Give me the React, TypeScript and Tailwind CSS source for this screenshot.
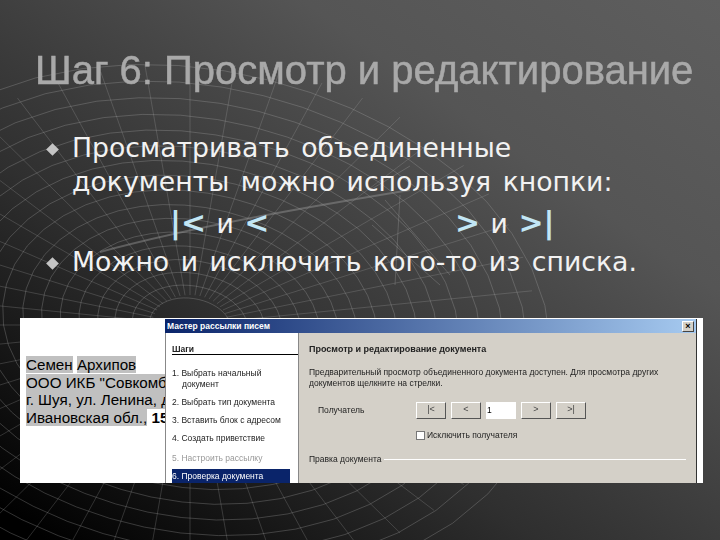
import React from "react";

const cx = 190, cy = 325;
const rings = [28, 40, 52, 64, 77, 90, 103, 116, 130, 144, 158, 172, 187, 202, 218, 234, 250];
function WebLines() {
  const arcs: string[] = [];
  rings.forEach((r, i) => {
    const rx = r * 1.38, ry = r * 1.0 + i * 1.2;
    const pts: string[] = [];
    for (let a = -180; a <= 180; a += 8) {
      const t = (a * Math.PI) / 180;
      const wob = 1 + 0.07 * Math.sin(2 * t + 0.6);
      const x = cx + rx * wob * Math.cos(t);
      const y = cy + ry * wob * Math.sin(t);
      pts.push(`${x.toFixed(1)},${y.toFixed(1)}`);
    }
    arcs.push(pts.join(" "));
  });
  const spokes: [number, number, number, number][] = [];
  for (let a = 0; a < 360; a += 7.5) {
    const t = (a * Math.PI) / 180;
    const c = Math.cos(t), s = Math.sin(t);
    spokes.push([cx + 38 * c, cy + 30 * s, cx + 345 * c, cy + 262 * s]);
  }
  return (
    <svg className="absolute inset-0" width="720" height="540" viewBox="0 0 720 540" fill="none">
      {arcs.map((p, i) => (
        <polyline key={i} points={p} stroke="#b0b0b0" strokeOpacity={0.36} strokeWidth={0.8} />
      ))}
      {spokes.map((l, i) => (
        <line key={i} x1={l[0]} y1={l[1]} x2={l[2]} y2={l[3]} stroke="#b0b0b0" strokeOpacity={0.3} strokeWidth={0.8} />
      ))}
      <path d="M100 252 C 200 225 320 205 410 190" stroke="#9a9a9a" strokeOpacity={0.45} strokeWidth={2} />
      <path d="M370 190 L410 166 M385 200 L450 275 M400 195 L395 285 M372 225 L440 285" stroke="#a8a8a8" strokeOpacity={0.3} strokeWidth={1} />
    </svg>
  );
}

function Btn({ t }: { t: string }) {
  return (
    <div className="w-[30px] h-[17px] flex items-center justify-center text-[9px] text-[#444] bg-[#d4d0c8] border border-t-white border-l-white border-r-[#555] border-b-[#555]">
      {t}
    </div>
  );
}

function Bullet() {
  return (
    <div className="w-[26px] pt-[14px] shrink-0">
      <div className="w-[9px] h-[9px] ml-[1.5px] rotate-45 bg-[#c4c4c4]" />
    </div>
  );
}

export default function App() {
  return (
    <div className="relative w-[720px] h-[540px] overflow-hidden bg-[linear-gradient(35deg,#000000_3%,#2f2f2f_36%,#555555_72%,#5e5e5e_100%)]">
      <WebLines />
      <div className="relative flex flex-col pt-[48px] font-['DejaVu_Sans',sans-serif] text-[#f2f2f2]">
        <h1 className="pl-[35px] h-[44px] leading-[44px] whitespace-nowrap font-['Liberation_Sans',sans-serif] text-[40px] text-[#a9a9a9] [-webkit-text-stroke:0.5px_#a9a9a9] blur-[0.3px]">
          Шаг 6: Просмотр и редактирование
        </h1>
        <div className="mt-[39px] pl-[46px] text-[26.7px] leading-[34px] [word-spacing:3px]">
          <div className="flex items-start">
            <Bullet />
            <div className="whitespace-nowrap">
              Просматривать объединенные
              <br />
              документы можно используя кнопки:
            </div>
          </div>
          <div className="flex h-[42px] pt-[7px] items-center whitespace-nowrap font-bold">
            <div className="pl-[124px] w-[409px] text-[#c2e6f5] text-[30px] [word-spacing:0px]">
              |&lt; <span className="font-normal text-[26.7px] text-[#f2f2f2]">и</span> &lt;
            </div>
            <div className="text-[#c2e6f5] text-[30px] [word-spacing:0px]">
              &gt; <span className="font-normal text-[26.7px] text-[#f2f2f2]">и</span> &gt;|
            </div>
          </div>
          <div className="flex items-start mt-[4px]">
            <Bullet />
            <div className="whitespace-nowrap">Можно и исключить кого-то из списка.</div>
          </div>
        </div>

        <div className="ml-[20px] mt-[39px] w-[683px] h-[165px] flex bg-white overflow-hidden font-['Liberation_Sans',sans-serif]">
          <div className="w-[145px] shrink-0 pl-[6px] pt-[38px] text-[15.2px] leading-[17.5px] text-black whitespace-nowrap overflow-hidden">
            <div><span className="bg-[#c0c0c0]">Семен</span> <span className="bg-[#c0c0c0]">Архипов</span></div>
            <div className="bg-[#c0c0c0]">ООО ИКБ "Совкомбанк"</div>
            <div className="bg-[#c0c0c0]">г. Шуя, ул. Ленина, д. 1</div>
            <div><span className="bg-[#c0c0c0]">Ивановская обл.,</span> <b>15</b></div>
          </div>
          <div className="w-[532px] shrink-0 mt-[1px] flex flex-col border-r border-[#333]">
            <div className="h-[14px] shrink-0 pl-[2px] flex items-center justify-between bg-[linear-gradient(90deg,#0a246a,#a6caf0)] text-[8.5px] font-bold text-white leading-none">
              <span>Мастер рассылки писем</span>
              <span className="w-[12px] h-[11px] mr-[2px] flex items-center justify-center bg-[#d4d0c8] text-black text-[9px] border border-t-white border-l-white border-r-[#444] border-b-[#444]">×</span>
            </div>
            <div className="flex flex-1 min-h-0">
              <div className="w-[133px] shrink-0 bg-white border-l border-[#888] flex flex-col pl-[6px] text-[8.5px] text-[#222] blur-[0.3px]">
                <div className="mt-[11px] pb-[0px] border-b border-black font-bold text-[8.5px] leading-[10px]">Шаги</div>
                <div className="mt-[13px] leading-[10.5px]">
                  <div>1. Выбрать начальный</div>
                  <div className="pl-[10px]">документ</div>
                </div>
                <div className="mt-[8px] leading-[10.5px]">2. Выбрать тип документа</div>
                <div className="mt-[7px] leading-[10.5px]">3. Вставить блок с адресом</div>
                <div className="mt-[8px] leading-[10.5px]">4. Создать приветствие</div>
                <div className="mt-[9px] leading-[10.5px] text-[#999]">5. Настроить рассылку</div>
                <div className="mt-[6px] w-[118px] h-[14px] pt-[1px] bg-[#0a246a] text-white leading-[12px]">6. Проверка документа</div>
              </div>
              <div className="flex-1 bg-[#d4d0c8] border-l border-[#888] pl-[10px] pr-[10px] text-[8.5px] text-[#222] blur-[0.3px]">
                <div className="mt-[11px] font-bold leading-[10px] text-[9px]">Просмотр и редактирование документа</div>
                <div className="mt-[13px] leading-[11px] whitespace-nowrap">Предварительный просмотр объединенного документа доступен. Для просмотра других<br />документов щелкните на стрелки.</div>
                <div className="mt-[12px] flex items-center h-[18px]">
                  <div className="w-[107px] pl-[9px]">Получатель</div>
                  <Btn t="|<" />
                  <div className="w-[5px]" />
                  <Btn t="<" />
                  <div className="w-[30px] h-[17px] ml-[5px] bg-white leading-[17px] pl-[1px] text-black">1</div>
                  <div className="w-[5px]" />
                  <Btn t=">" />
                  <div className="w-[5px]" />
                  <Btn t=">|" />
                </div>
                <div className="mt-[11px] ml-[107px] flex items-center h-[10px] gap-[2px]">
                  <div className="w-[9px] h-[9px] bg-white border border-[#777]" />
                  <span>Исключить получателя</span>
                </div>
                <div className="mt-[14px] flex items-center gap-[2px] leading-[10px]">
                  <span>Правка документа</span>
                  <div className="flex-1 h-px bg-white" />
                </div>
              </div>
            </div>
          </div>
          <div className="w-[6px] shrink-0" />
        </div>
      </div>
    </div>
  );
}
